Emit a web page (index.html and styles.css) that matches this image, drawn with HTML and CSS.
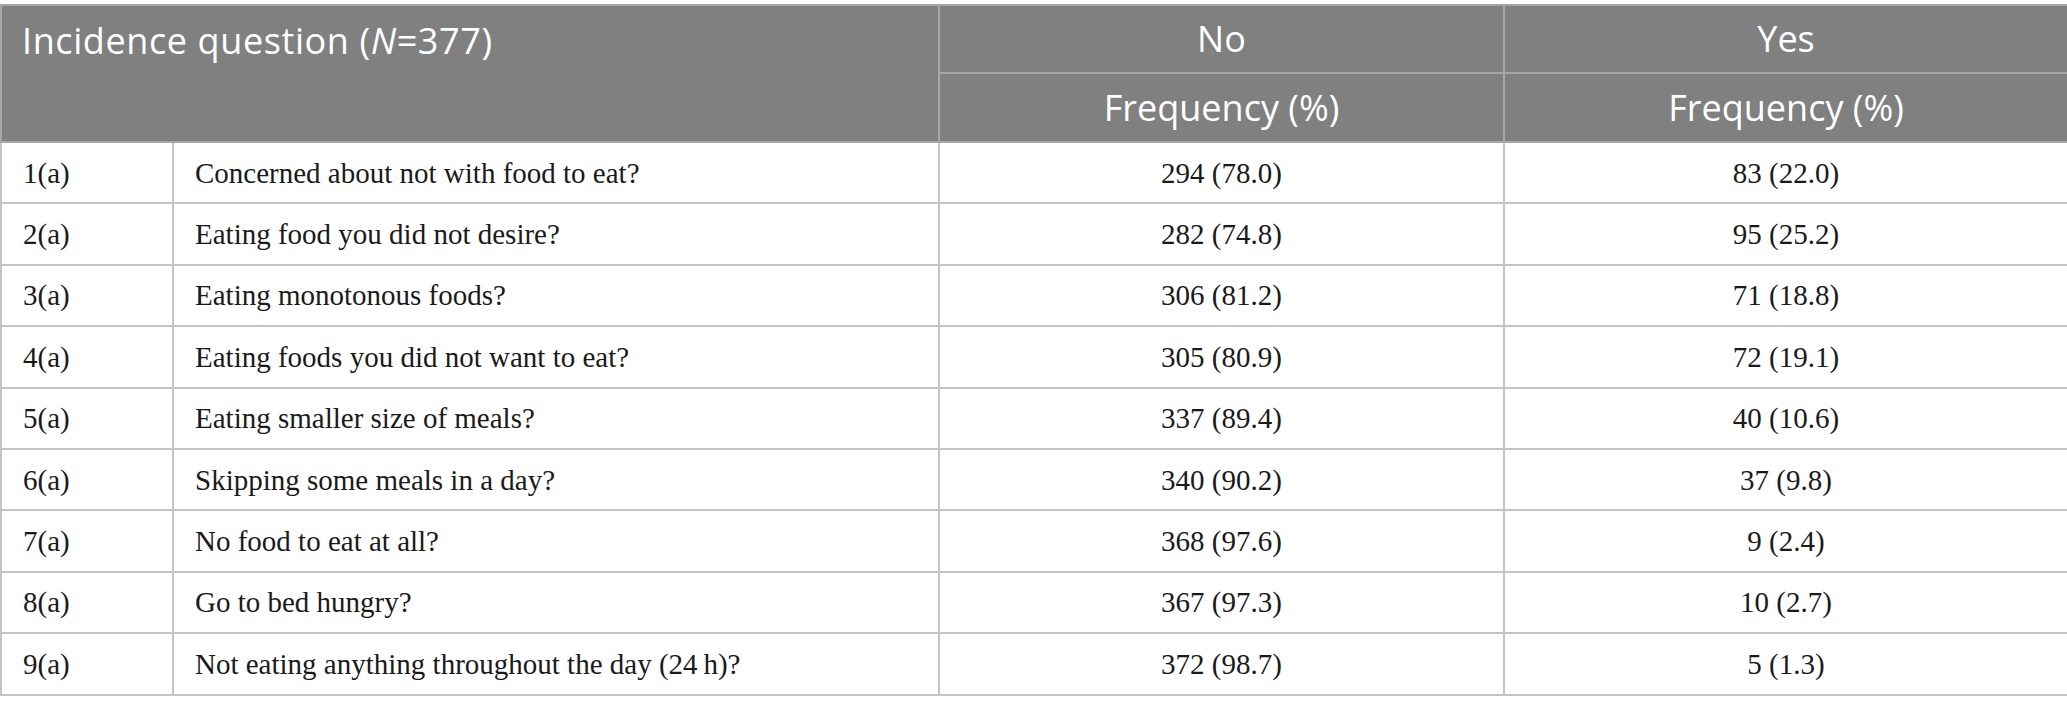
FILE: index.html
```html
<!DOCTYPE html>
<html>
<head>
<meta charset="utf-8">
<link rel="stylesheet" href="styles.css">
</head>
<body>
<div class="wrap">
<table class="tbl">
  <colgroup>
    <col class="c1"><col class="c2"><col class="c3"><col class="c4">
  </colgroup>
  <thead>
    <tr class="h1">
      <th class="title" colspan="2" rowspan="2">Incidence question (<i>N</i>=377)</th>
      <th>No</th>
      <th>Yes</th>
    </tr>
    <tr class="h2">
      <th>Frequency (%)</th>
      <th>Frequency (%)</th>
    </tr>
  </thead>
  <tbody>
    <tr><td>1(a)</td><td>Concerned about not with food to eat?</td><td class="n">294 (78.0)</td><td class="n">83 (22.0)</td></tr>
    <tr><td>2(a)</td><td>Eating food you did not desire?</td><td class="n">282 (74.8)</td><td class="n">95 (25.2)</td></tr>
    <tr><td>3(a)</td><td>Eating monotonous foods?</td><td class="n">306 (81.2)</td><td class="n">71 (18.8)</td></tr>
    <tr><td>4(a)</td><td>Eating foods you did not want to eat?</td><td class="n">305 (80.9)</td><td class="n">72 (19.1)</td></tr>
    <tr><td>5(a)</td><td>Eating smaller size of meals?</td><td class="n">337 (89.4)</td><td class="n">40 (10.6)</td></tr>
    <tr><td>6(a)</td><td>Skipping some meals in a day?</td><td class="n">340 (90.2)</td><td class="n">37 (9.8)</td></tr>
    <tr><td>7(a)</td><td>No food to eat at all?</td><td class="n">368 (97.6)</td><td class="n">9 (2.4)</td></tr>
    <tr><td>8(a)</td><td>Go to bed hungry?</td><td class="n">367 (97.3)</td><td class="n">10 (2.7)</td></tr>
    <tr><td>9(a)</td><td>Not eating anything throughout the day (24&#8201;h)?</td><td class="n">372 (98.7)</td><td class="n">5 (1.3)</td></tr>
  </tbody>
</table>
</div>
</body>
</html>
```

FILE: styles.css
```css
html, body {
  margin: 0;
  padding: 0;
  background: #ffffff;
}
.wrap {
  padding-top: 4px;
}
.tbl {
  width: 2067px;
  border-collapse: collapse;
  table-layout: fixed;
  border: 1px solid #bdbdbd;
  border-bottom: 2px solid #bdbdbd;
}
.c1 { width: 172px; }
.c2 { width: 766px; }
.c3 { width: 565px; }
.c4 { width: 564px; }
.tbl th {
  background: #808080;
  color: #ffffff;
  font-family: "Open Sans", "Noto Sans", sans-serif;
  font-weight: 400;
  font-size: 36px;
  line-height: 44px;
  text-align: center;
  border: 2px solid #a6a6a6;
  padding: 0;
}
.tbl tr.h1 th { height: 66px; }
.tbl tr.h2 th { height: 67px; }
.tbl th.title {
  text-align: left;
  vertical-align: top;
  padding: 13px 0 0 20px;
  letter-spacing: 0.6px;
}
.tbl td {
  font-family: "Liberation Serif", "Times New Roman", serif;
  font-size: 29px;
  line-height: 34px;
  color: #1a1a1a;
  height: 59.4px;
  padding: 0 0 0 21px;
  border: 2px solid #c4c4c4;
  vertical-align: middle;
}
.tbl td.n {
  text-align: center;
  padding: 0;
}
```
